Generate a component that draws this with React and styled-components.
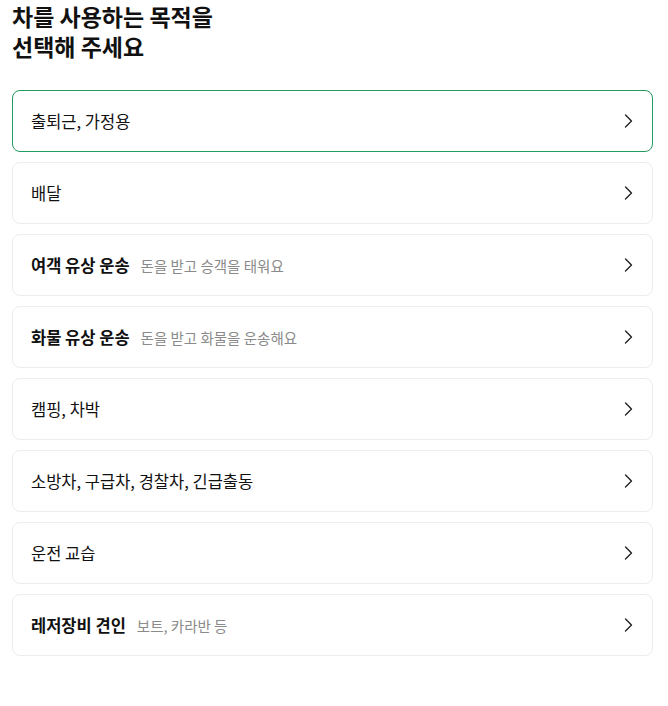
import React from "react";
import styled, { createGlobalStyle } from "styled-components";

const Global = createGlobalStyle`
    body {
        margin: 0;
        background: #fff;
        font-family: "Noto Sans CJK KR", "Noto Sans", sans-serif;
        color: #111;
    }
`

const Page = styled.div`
    padding: 0 15px 0 12px;
`, Title = styled.h1`
    margin: 0 0 29px;
    padding-top: 1px;
    font-size: 23px;
    line-height: 30px;
    font-weight: 700;
    color: #111;
`, List = styled.div`
    display: flex;
    flex-direction: column;
    gap: 10px;
`, Card = styled.div`
    height: 62px;
    box-sizing: border-box;
    border: 1px solid ${p => p.$active ? "#22995f" : "#ececec"};
    border-radius: 8px;
    display: flex;
    align-items: center;
    justify-content: space-between;
    padding: 0 18px;
`, Label = styled.div`
    display: flex;
    align-items: baseline;
    gap: 11px;
`, Name = styled.span`
    font-size: 16.5px;
    font-weight: ${p => p.$bold ? 700 : 400};
    color: #111;
`, Sub = styled.span`
    font-size: 14.5px;
    color: #8a8a8a;
`, Arrow = styled.svg`
    width: 10px;
    height: 14px;
    margin-right: 1px;
`

const items = [
    { name: "출퇴근, 가정용", active: true },
    { name: "배달" },
    { name: "여객 유상 운송", sub: "돈을 받고 승객을 태워요" },
    { name: "화물 유상 운송", sub: "돈을 받고 화물을 운송해요" },
    { name: "캠핑, 차박" },
    { name: "소방차, 구급차, 경찰차, 긴급출동" },
    { name: "운전 교습" },
    { name: "레저장비 견인", sub: "보트, 카라반 등" },
]

export default function App() {
    return (
        <Page>
            <Global />
            <Title>차를 사용하는 목적을<br />선택해 주세요</Title>
            <List>
                {items.map(it => (
                    <Card key={it.name} $active={it.active}>
                        <Label>
                            <Name $bold={!!it.sub}>{it.name}</Name>
                            {it.sub && <Sub>{it.sub}</Sub>}
                        </Label>
                        <Arrow viewBox="0 0 10 14">
                            <path d="M2.5 1 L8.5 7 L2.5 13" fill="none" stroke="#222" strokeWidth="1.4" strokeLinecap="round" strokeLinejoin="round" />
                        </Arrow>
                    </Card>
                ))}
            </List>
        </Page>
    )
}
